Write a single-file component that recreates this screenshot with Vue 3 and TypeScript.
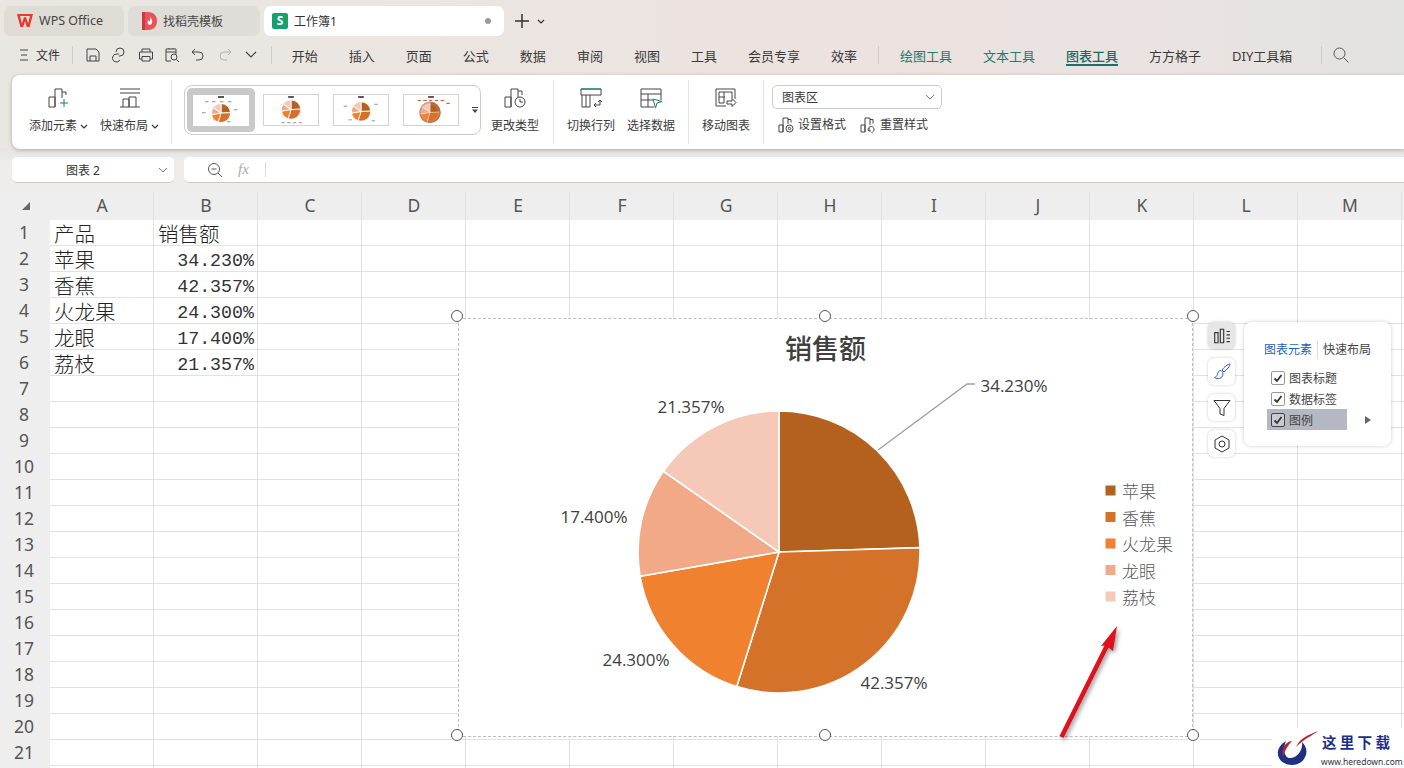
<script setup lang="ts">
const menuItems = ['开始', '插入', '页面', '公式', '数据', '审阅', '视图', '工具', '会员专享', '效率']
const columns = ['A', 'B', 'C', 'D', 'E', 'F', 'G', 'H', 'I', 'J', 'K', 'L', 'M', '']
const rowNumbers = Array.from({ length: 22 }, (_, i) => i + 1)

const sales = [
  { name: '苹果', value: 34.23, label: '34.230%', color: '#b4611f' },
  { name: '香蕉', value: 42.357, label: '42.357%', color: '#d5722a' },
  { name: '火龙果', value: 24.3, label: '24.300%', color: '#ef812f' },
  { name: '龙眼', value: 17.4, label: '17.400%', color: '#f1a988' },
  { name: '荔枝', value: 21.357, label: '21.357%', color: '#f5c8b7' },
]

function cell(row: number, col: number): string {
  if (row === 1) return col === 0 ? '产品' : col === 1 ? '销售额' : ''
  const item = sales[row - 2]
  if (!item) return ''
  return col === 0 ? item.name : col === 1 ? item.label : ''
}

function slices(cx: number, cy: number, r: number) {
  const total = sales.reduce((sum, s) => sum + s.value, 0)
  let angle = 0
  return sales.map((s) => {
    const start = angle
    angle += (s.value / total) * Math.PI * 2
    const x1 = cx + r * Math.sin(start)
    const y1 = cy - r * Math.cos(start)
    const x2 = cx + r * Math.sin(angle)
    const y2 = cy - r * Math.cos(angle)
    const large = angle - start > Math.PI ? 1 : 0
    return {
      color: s.color,
      d: `M${cx} ${cy}L${x1.toFixed(2)} ${y1.toFixed(2)}A${r} ${r} 0 ${large} 1 ${x2.toFixed(2)} ${y2.toFixed(2)}Z`,
    }
  })
}

const pie = slices(779, 551, 141)

const dataLabels = [
  { text: '34.230%', x: 1014, y: 384 },
  { text: '42.357%', x: 894, y: 681 },
  { text: '24.300%', x: 636, y: 658 },
  { text: '17.400%', x: 594, y: 515 },
  { text: '21.357%', x: 691, y: 405 },
]
const legendY = [489.5, 516, 542.5, 569, 595.5]

const handles = [
  { x: 457, y: 316 },
  { x: 825, y: 316 },
  { x: 1193, y: 316 },
  { x: 457, y: 735 },
  { x: 825, y: 735 },
  { x: 1193, y: 735 },
]

const thumbs = [
  { selected: true, cx: 28, cy: 18, r: 9.5, dots: [[12, 6], [19, 6], [27, 6], [35, 6], [9, 17], [41, 14], [34, 26], [20, 24]] },
  { selected: false, cx: 28, cy: 15, r: 10, dots: [[18, 28], [24, 28], [30, 28], [36, 28]] },
  { selected: false, cx: 28, cy: 17, r: 10, dots: [[10, 11], [42, 9], [39, 26], [15, 25]] },
  { selected: false, cx: 27, cy: 18, r: 11, dots: [[14, 5], [20, 5], [26, 5], [32, 5], [38, 5], [44, 8]] },
]
const thumbPies = thumbs.map((t) => slices(t.cx, t.cy, t.r))
</script>

<template>
  <div class="app">
    <header class="chrome">
      <div class="tabbar">
        <div class="tab tab-wps">
          <svg class="logo" viewBox="0 0 16 13" width="16" height="13"><path d="M0 0h16l-3.400 13H9.800L8 7.200 6.200 13H3.400zM3 2l1.900 7.400L7 3.200h2l2.100 6.200L13 2z" fill="#e8392c" /></svg>
          <span>WPS Office</span>
        </div>
        <div class="tab tab-tpl">
          <svg class="logo" viewBox="0 0 15 18" width="15" height="18"><path d="M0 0h6c6 0 9 4 9 9s-3 9-9 9H0z" fill="#e8545a" /><path d="M0 0h3v18H0z" fill="#c93a44" /><path d="M8 4c1 3 3 4 2 7-.5 2-3 2.500-4 1-1-1.500 0-3 1-4 0 1 .3 1.500 .8 1.500C8.500 8 8.500 6 8 4z" fill="#fff" /></svg>
          <span>找稻壳模板</span>
        </div>
        <div class="tab tab-active">
          <span class="sheet-logo">S</span>
          <span class="tab-name">工作簿1</span>
          <span class="dot"></span>
        </div>
        <svg class="plus" viewBox="0 0 14 14" width="14" height="14"><path d="M7 0v14M0 7h14" stroke="#333" stroke-width="1.500" fill="none" /></svg>
        <svg class="chev tab-chev" viewBox="0 0 8 5" width="8" height="5"><path d="M1 1l3 3 3-3" /></svg>
      </div>

      <nav class="menubar">
        <svg class="hamb" viewBox="0 0 8 12" width="8" height="12"><path d="M0 1h8M1 6h6M0 11h8" stroke="#444" fill="none" /></svg>
        <span class="file">文件</span>
        <i class="vsep first"></i>
        <div class="quick">
          <svg viewBox="0 0 16 16" class="ic"><path d="M2 2h9l3 3v9H2zM5 14V9h6v5" /></svg>
          <svg viewBox="0 0 16 16" class="ic"><path d="M8 9h1a4 4 0 1 0-4-4M8 7H6a4 4 0 1 0 3 6" /></svg>
          <svg viewBox="0 0 16 16" class="ic"><path d="M4 5V2h8v3M4 12H1.500V5h13v7H12M4 9.500h8V14H4z" /></svg>
          <svg viewBox="0 0 16 16" class="ic"><path d="M7 14H2V2h10v5M2 5h10M5 2V1M9 2V1" /><circle cx="10" cy="10" r="3" /><path d="M12.500 12.500L15 15" /></svg>
          <svg viewBox="0 0 16 16" class="ic"><path d="M5 2L2 5l3 3M2 5h7a4 4 0 0 1 0 8H6" /></svg>
          <svg viewBox="0 0 16 16" class="ic faint"><path d="M11 2l3 3-3 3M14 5H7a4 4 0 0 0 0 8h3" /></svg>
          <svg viewBox="0 0 12 8" class="qchev"><path d="M1 1l5 5 5-5" /></svg>
        </div>
        <i class="vsep second"></i>
        <div class="menu-items">
          <span v-for="item in menuItems" :key="item">{{ item }}</span>
          <i class="vsep"></i>
          <span class="tool">绘图工具</span>
          <span class="tool">文本工具</span>
          <span class="tool active">图表工具</span>
          <span>方方格子</span>
          <span>DIY工具箱</span>
          <i class="vsep end"></i>
          <svg class="search" viewBox="0 0 16 16" width="16" height="16"><circle cx="6.500" cy="6.500" r="5.500" /><path d="M10.500 10.500L15.500 15.500" /></svg>
        </div>
      </nav>

      <section class="ribbon">
        <div class="group g-add">
          <div class="big w-add">
            <svg viewBox="0 0 22 20" class="ic big-ic"><path d="M1 9h6v10H1zM7 19V1h7v9M14 4h4v3" /><path d="M16 11v8M12 15h8" class="teal" /></svg>
            <span class="blabel">添加元素<svg class="chev" viewBox="0 0 8 5" width="8" height="5"><path d="M1 1l3 3 3-3" /></svg></span>
          </div>
          <div class="big w-layout">
            <svg viewBox="0 0 22 20" class="ic big-ic"><path d="M1 1h20M1 5h20M1 19h20M4 19V11h6v8M10 19V9h7v10" /></svg>
            <span class="blabel">快速布局<svg class="chev" viewBox="0 0 8 5" width="8" height="5"><path d="M1 1l3 3 3-3" /></svg></span>
          </div>
        </div>
        <i class="rsep"></i>
        <div class="group g-gallery">
          <div class="gallery">
            <div v-for="(t, i) in thumbs" :key="i" class="thumb" :class="{ selected: t.selected }">
              <svg viewBox="0 0 56 31" class="thumb-svg">
                <defs v-if="i === 3">
                  <radialGradient id="thumb-shade" cx="0.500" cy="0.500" r="0.500">
                    <stop offset="0.700" stop-color="#fff" stop-opacity="0" />
                    <stop offset="1" stop-color="#7a3a10" stop-opacity="0.550" />
                  </radialGradient>
                </defs>
                <rect x="25" y="1" width="6" height="2" fill="#555" />
                <rect v-for="(p, j) in t.dots" :key="j" :x="p[0]" :y="p[1]" width="3.500" height="1.300" :fill="i === 3 ? '#b4713f' : '#aaa'" />
                <path v-for="(s, j) in thumbPies[i]" :key="j" :d="s.d" :fill="s.color" stroke="#fff" :stroke-width="i === 3 ? 0.3 : 0.9" />
                <circle v-if="i === 3" :cx="t.cx" :cy="t.cy" :r="t.r" fill="url(#thumb-shade)" />
              </svg>
            </div>
            <svg class="gallery-more" viewBox="0 0 8 8" width="8" height="8"><path d="M1 1.500h6" stroke="#444" fill="none" /><path d="M1 3.500h6L4 7z" fill="#444" /></svg>
          </div>
          <div class="big w-type">
            <svg viewBox="0 0 22 20" class="ic big-ic"><path d="M1 9h6v10H1zM7 19V1h7v8M14 3h4v4" /><circle cx="16" cy="14" r="5" /><path d="M16 14v-3M16 14h3" /></svg>
            <span class="blabel">更改类型</span>
          </div>
        </div>
        <i class="rsep"></i>
        <div class="group g-data">
          <div class="big w-data">
            <svg viewBox="0 0 22 20" class="ic big-ic"><path d="M1 1h20v6H1zM2 7v12h8V7M6 7v12" /><path d="M14 17h6v-5M18 14l2-2 2 2M16 15l-2 2 2 2" /><path d="M1 1h20" class="teal" /></svg>
            <span class="blabel">切换行列</span>
          </div>
          <div class="big w-data">
            <svg viewBox="0 0 22 20" class="ic big-ic"><path d="M1 1h20v11M1 1v18h13M1 6h20M1 12h12M8 6v13" /><path d="M13 11l9 2.500-5 1.500-1.500 5z" class="teal" /></svg>
            <span class="blabel">选择数据</span>
          </div>
        </div>
        <i class="rsep"></i>
        <div class="group g-move">
          <div class="big w-move">
            <svg viewBox="0 0 22 20" class="ic big-ic"><path d="M11 18H1V1h19v10M4 4v11h5M4 4h13v6M4 9h6M9 4v11" /><path d="M12 13h5v-2.500l4 4-4 4V16h-5z" /></svg>
            <span class="blabel">移动图表</span>
          </div>
        </div>
        <i class="rsep"></i>
        <div class="g-format">
          <div class="select">
            <span>图表区</span>
            <svg class="sel-chev" viewBox="0 0 10 6" width="10" height="6"><path d="M1 1l4 4 4-4" /></svg>
          </div>
          <div class="format-row">
            <span class="fmt">
              <svg viewBox="0 0 16 16" class="ic"><path d="M1 8h4v7H1zM5 15V1h5v6M10 2.500h3v3" /><circle cx="11.500" cy="11.500" r="3.500" /><circle cx="11.500" cy="11.500" r="1.200" /></svg>
              设置格式
            </span>
            <span class="fmt">
              <svg viewBox="0 0 16 16" class="ic"><path d="M1 8h4v7H1zM5 15V1h5v7M10 2.500h3v4M8.500 14a3 3 0 1 1 3 1.500M9 11v3h2" /></svg>
              重置样式
            </span>
          </div>
        </div>
      </section>

      <div class="formula">
        <div class="namebox">
          <span>图表 2</span>
          <svg class="sel-chev" viewBox="0 0 10 6" width="10" height="6"><path d="M1 1l4 4 4-4" /></svg>
        </div>
        <div class="fx-input">
          <svg class="zoom-ic" viewBox="0 0 16 16" width="16" height="16"><circle cx="7" cy="7" r="5.500" /><path d="M4.500 7h5M11 11l4 4" /></svg>
          <span class="fx">fx</span>
          <i class="fx-sep"></i>
        </div>
      </div>
    </header>

    <main class="sheet">
      <div class="grid">
        <div class="corner"><i></i></div>
        <div v-for="c in columns" :key="'h' + c" class="col-head">{{ c }}</div>
        <template v-for="r in rowNumbers" :key="r">
          <div class="row-head">{{ r < 22 ? r : '' }}</div>
          <div
            v-for="(c, ci) in columns"
            :key="r + '-' + ci"
            class="cell"
            :class="{ num: r > 1 && ci === 1 }"
          >{{ cell(r, ci) }}</div>
        </template>
      </div>

      <div class="chart">
        <svg class="chart-svg" viewBox="459 318 733 417" width="733" height="417">
          <text x="825.500" y="346" class="title">销售额</text>
          <path v-for="(s, i) in pie" :key="i" :d="s.d" :fill="s.color" stroke="#fff" stroke-width="1.600" />
          <path d="M878 449L967 383H975" class="leader" />
          <text v-for="l in dataLabels" :key="l.text" :x="l.x" :y="l.y" class="dlabel">{{ l.text }}</text>
          <template v-for="(s, i) in sales" :key="s.name">
            <rect x="1105.500" :y="legendY[i] - 5" width="10" height="10" :fill="s.color" />
            <text x="1122" :y="legendY[i]" class="legend">{{ s.name }}</text>
          </template>
        </svg>
        <i
          v-for="(h, i) in handles"
          :key="i"
          class="handle"
          :style="{ left: h.x - 459 + 'px', top: h.y - 319 + 'px' }"
        ></i>
      </div>

      <div class="side-btns">
        <button class="side on">
          <svg viewBox="0 0 16 16" class="ic"><path d="M1.500 5h3v9h-3zM6.500 2h3v12h-3zM12 4h3M12 7h3M12 10h3M12 13h3" /></svg>
        </button>
        <button class="side">
          <svg viewBox="0 0 18 18" class="ic blue"><path d="M17 1c-2 0-6 3-8 6l2 2c3-2 6-6 6-8zM8 7.500c-3 0-3 2-3.500 4C4 13 3 14 1.500 14.500c3 2 8 1.500 8.500-3.500 .1-1-.6-2-2-3.500z" /></svg>
        </button>
        <button class="side">
          <svg viewBox="0 0 18 18" class="ic"><path d="M1 1.500h16l-6 8v7l-4-1.500V9.500z" /></svg>
        </button>
        <button class="side">
          <svg viewBox="0 0 18 18" class="ic"><path d="M9 1l7 4v8l-7 4-7-4V5z" /><circle cx="9" cy="9" r="3" /></svg>
        </button>
      </div>

      <div class="popup">
        <div class="popup-tabs">
          <span class="ptab on">图表元素</span>
          <span class="ptab">快速布局</span>
        </div>
        <label class="check"><i class="box">
          <svg viewBox="0 0 10 10" width="10" height="10"><path d="M1.500 5.500L4 8l4.500-6" /></svg>
        </i>图表标题</label>
        <label class="check"><i class="box">
          <svg viewBox="0 0 10 10" width="10" height="10"><path d="M1.500 5.500L4 8l4.500-6" /></svg>
        </i>数据标签</label>
        <label class="check hl"><i class="box">
          <svg viewBox="0 0 10 10" width="10" height="10"><path d="M1.500 5.500L4 8l4.500-6" /></svg>
        </i>图例</label>
        <i class="more"></i>
      </div>

      <svg class="red-arrow" viewBox="1050 620 80 125" width="80" height="125">
        <path d="M1059.500 736L1104.500 645.500 1101 646 1117 626 1113 651 1108.500 647.500 1063.500 738z" fill="#e2101a" />
      </svg>

      <div class="watermark">
        <svg class="wm-logo" viewBox="1272 728 48 40" width="48" height="40">
          <path d="M1286 741C1279 745 1276 752 1279 758C1283 766 1298 768 1304 759C1308 753 1307 747 1302 742C1303 750 1298 757 1291 758C1285 759 1282 750 1286 741Z" fill="#1d2f87" />
          <path d="M1283 757C1281 748 1285 742 1292 741C1288 745 1285 750 1283 757Z" fill="#b3262f" />
          <path d="M1296 747C1300 738 1308 735 1318 731C1312 736 1305 738 1296 747Z" fill="#b3262f" />
        </svg>
        <div class="wm-text">
          <b>这里下载</b>
          <span>www.heredown.com</span>
        </div>
      </div>
    </main>
  </div>
</template>

<style>
html,
body {
  margin: 0;
  overflow: hidden;
}
</style>

<style scoped>
.app {
  width: 1404px;
  height: 768px;
  position: relative;
  overflow: hidden;
  display: flex;
  flex-direction: column;
  font-family: 'Noto Sans', 'Noto Sans CJK SC', sans-serif;
  color: #333;
  background: #fff;
}
i {
  font-style: normal;
  display: block;
}

/* top chrome */
.chrome {
  height: 192px;
  flex: none;
  background: linear-gradient(90deg, #e9e7e2 0%, #ebe5e1 35%, #ece2df 60%, #e9e3e1 85%, #e3e3e1 100%);
}
.tabbar {
  height: 40px;
  padding: 6px 0 0 4px;
  box-sizing: border-box;
  display: flex;
  align-items: flex-start;
  gap: 4px;
}
.tab {
  height: 30px;
  padding-bottom: 1px;
  border-radius: 7px;
  background: #dfdcd6;
  display: flex;
  align-items: center;
  font-size: 12px;
  box-sizing: border-box;
  color: #444;
}
.tab-wps {
  width: 120px;
  padding-left: 13px;
  gap: 6px;
  font-size: 12.500px;
}
.tab-tpl {
  width: 132px;
  padding-left: 14px;
  gap: 6px;
  background: #e0dcd8;
}
.tab-active {
  width: 240px;
  padding-left: 8px;
  background: #fff;
  color: #333;
}
.sheet-logo {
  width: 16px;
  height: 16px;
  background: #16a06c;
  border-radius: 2px;
  color: #fff;
  font-size: 12px;
  font-weight: 700;
  line-height: 15px;
  text-align: center;
}
.tab-name {
  margin-left: 6px;
  flex: 1;
}
.dot {
  width: 6px;
  height: 6px;
  border-radius: 50%;
  background: #999;
  margin-right: 13px;
}
.plus {
  margin: 8px 0 0 7px;
}
.tab-chev {
  margin: 13px 0 0 4px;
}
.chev {
  fill: none;
  stroke: #333;
  stroke-width: 1.200;
}
.menubar {
  height: 30px;
  margin-bottom: 5px;
  display: flex;
  align-items: center;
  font-size: 13px;
}
.hamb {
  margin-left: 20px;
}
.file {
  font-size: 12px;
  margin-left: 8px;
}
.vsep {
  width: 1px;
  height: 18px;
  background: #cfccc8;
  flex: none;
}
.vsep.first {
  margin-left: 12px;
}
.quick {
  display: flex;
  align-items: center;
  gap: 10.300px;
  margin-left: 12px;
}
.ic {
  width: 16px;
  height: 16px;
  fill: none;
  stroke: #444;
  stroke-width: 1;
  flex: none;
}
.ic.faint {
  stroke: #b5b3b0;
}
.qchev {
  width: 12px;
  height: 8px;
  fill: none;
  stroke: #444;
  stroke-width: 1.200;
  margin-left: 2px;
}
.vsep.second {
  margin-left: 14px;
}
.menu-items {
  display: flex;
  align-items: center;
  gap: 31px;
  margin-left: 20px;
  white-space: nowrap;
  color: #3a3a3a;
}
.menu-items .vsep {
  margin: 0 -10px;
}
.menu-items .vsep.end {
  margin: 0 -20px 0 -2px;
}
.tool {
  color: #17806a;
  position: relative;
}
.tool.active {
  color: #136f5c;
  font-weight: 500;
}
.tool.active::after {
  content: '';
  position: absolute;
  left: 0;
  right: 0;
  bottom: -1px;
  height: 2px;
  background: #1a7362;
}
.search {
  fill: none;
  stroke: #555;
  stroke-width: 1;
}

/* ribbon */
.ribbon {
  margin-left: 12px;
  height: 74px;
  position: relative;
  z-index: 1;
  background: #fff;
  border-radius: 8px 0 0 8px;
  box-shadow: 0 1px 4px rgba(0, 0, 0, 0.25);
  display: flex;
  align-items: stretch;
  font-size: 12px;
  color: #3a3a3a;
}
.rsep {
  width: 1px;
  background: #e4e4e4;
  margin: 5px 0 5px 0;
  flex: none;
}
.group {
  display: flex;
}
.g-add {
  width: 159px;
  padding-left: 11px;
  box-sizing: border-box;
}
.big {
  display: flex;
  flex-direction: column;
  align-items: center;
  padding-top: 13px;
  box-sizing: border-box;
}
.big-ic {
  width: 22px;
  height: 20px;
}
.blabel {
  margin-top: 9px;
  white-space: nowrap;
  line-height: 18px;
  display: flex;
  align-items: center;
  gap: 3px;
}
.w-add {
  width: 71px;
}
.w-layout {
  width: 71px;
}
.teal {
  stroke: #17806a;
}
.g-gallery {
  width: 381px;
  padding-left: 12px;
  box-sizing: border-box;
}
.gallery {
  margin-top: 10px;
  width: 297px;
  height: 50px;
  flex: none;
  border: 1px solid #ccc;
  border-radius: 8px;
  box-sizing: border-box;
  display: flex;
  align-items: center;
  padding-left: 2px;
  position: relative;
  gap: 14px;
}
.thumb {
  width: 56px;
  height: 32px;
  border: 1px solid #d4d4d4;
  box-sizing: border-box;
  background: #fff;
}
.thumb.selected {
  width: 68px;
  height: 44px;
  border: 0;
  border-radius: 5px;
  background: #c9c9c9;
  padding: 7px 6px 6px;
  margin-right: -6px;
}
.thumb-svg {
  display: block;
  width: 100%;
  height: 100%;
  background: #fff;
}
.gallery-more {
  position: absolute;
  right: 1px;
  top: 20px;
}
.w-type {
  width: 68px;
}
.g-data {
  width: 134px;
  padding-left: 7px;
  box-sizing: border-box;
}
.w-data {
  width: 60px;
}
.g-move {
  width: 74px;
  justify-content: center;
}
.g-format {
  padding: 10px 0 0 8px;
}
.select {
  width: 170px;
  height: 24px;
  border: 1px solid #ccc;
  border-radius: 5px;
  box-sizing: border-box;
  display: flex;
  align-items: center;
  justify-content: space-between;
  padding: 0 6px 0 9px;
}
.sel-chev {
  fill: none;
  stroke: #777;
  stroke-width: 1;
}
.format-row {
  display: flex;
  gap: 14px;
  margin: 7px 0 0 6px;
}
.fmt {
  display: flex;
  align-items: center;
  gap: 4px;
  line-height: 18px;
}

/* formula bar */
.formula {
  height: 43px;
  box-sizing: border-box;
  padding: 8px 0 9px 12px;
  display: flex;
  gap: 10px;
  font-size: 12px;
  background: linear-gradient(#e6e3e0, #eeedec 30%);
}
.namebox {
  width: 162px;
  background: #fff;
  border-radius: 5px;
  border-bottom: 1px solid #c8c8c8;
  box-sizing: border-box;
  display: flex;
  align-items: center;
  justify-content: space-between;
  padding: 0 6px 0 54px;
}
.fx-input {
  flex: 1;
  background: #fff;
  border-radius: 5px 0 0 5px;
  border-bottom: 1px solid #c8c8c8;
  box-sizing: border-box;
  display: flex;
  align-items: center;
  padding-left: 23px;
}
.zoom-ic {
  fill: none;
  stroke: #555;
  stroke-width: 1;
}
.fx {
  font-family: 'Liberation Serif', serif;
  font-style: italic;
  font-size: 15px;
  color: #aaa;
  margin-left: 15px;
}
.fx-sep {
  width: 1px;
  height: 15px;
  background: #ddd;
  margin-left: 16px;
}

/* sheet */
.sheet {
  flex: 1;
  position: relative;
  overflow: hidden;
  background: #fff;
}
.grid {
  display: grid;
  grid-template-columns: 50px repeat(14, 104px);
  grid-template-rows: 28px repeat(22, 26px);
}
.corner,
.col-head,
.row-head {
  background: #eeeeee;
  color: #555;
  font-size: 17.500px;
}
.corner {
  position: relative;
}
.corner i {
  position: absolute;
  left: 22px;
  top: 10px;
  width: 0;
  height: 0;
  border-left: 8px solid transparent;
  border-bottom: 8px solid #666;
}
.col-head {
  text-align: center;
  line-height: 27px;
  padding-left: 1px;
  border-right: 1px solid #e2e2e2;
  box-sizing: border-box;
}
.row-head {
  text-align: center;
  line-height: 24px;
  padding-right: 2px;
  box-sizing: border-box;
}
.cell {
  border-right: 1px solid #e2e2e2;
  border-bottom: 1px solid #e2e2e2;
  box-sizing: border-box;
  padding: 0 3px 0 4px;
  font-size: 20.500px;
  line-height: 30px;
  height: 26px;
  overflow: visible;
  white-space: nowrap;
  color: #222;
  font-weight: 300;
  font-family: 'Liberation Serif', 'Noto Sans CJK SC', serif;
}
.cell.num {
  text-align: right;
  font-family: 'Liberation Mono', monospace;
  font-size: 18.300px;
  color: #333;
}

/* chart */
.chart {
  position: absolute;
  left: 459px;
  top: 127px;
  width: 733px;
  height: 417px;
  background: #fff;
  outline: 1px dashed #bdbdbd;
}
.chart-svg {
  display: block;
}
.title {
  font-size: 27px;
  font-weight: 500;
  fill: #404040;
  text-anchor: middle;
  dominant-baseline: central;
  font-family: 'Noto Sans CJK SC', serif;
}
.leader {
  fill: none;
  stroke: #a0a0a0;
  stroke-width: 1.300;
}
.dlabel {
  font-size: 17px;
  fill: #404040;
  text-anchor: middle;
  dominant-baseline: central;
  font-family: 'Open Sans', sans-serif;
}
.legend {
  font-size: 17px;
  fill: #595959;
  dominant-baseline: central;
  font-family: 'Noto Sans CJK SC', sans-serif;
  font-weight: 300;
}
.handle {
  position: absolute;
  width: 12px;
  height: 12px;
  margin: -6px 0 0 -6px;
  border-radius: 50%;
  border: 1px solid #555;
  background: #fff;
  box-sizing: border-box;
}

/* chart side tools */
.side-btns {
  position: absolute;
  left: 1208px;
  top: 130px;
  display: flex;
  flex-direction: column;
  gap: 9px;
}
.side {
  width: 27px;
  height: 27px;
  padding: 0;
  border: 0;
  border-radius: 6px;
  background: #fff;
  box-shadow: 0 0 3px rgba(0, 0, 0, 0.22);
  display: flex;
  align-items: center;
  justify-content: center;
}
.side .ic {
  width: 18px;
  height: 18px;
  stroke: #333;
}
.side.on {
  background: #e6e6e6;
}
.side .ic.blue {
  stroke: #2a5bb5;
}
.popup {
  position: absolute;
  left: 1244px;
  top: 130px;
  width: 147px;
  height: 124px;
  box-sizing: border-box;
  padding: 19px 0 0 23px;
  background: #fff;
  border-radius: 8px;
  box-shadow: 0 0 4px rgba(0, 0, 0, 0.2);
  font-size: 12px;
  color: #444;
}
.popup-tabs {
  display: flex;
  margin: 0 0 8px -3px;
  line-height: 18px;
}
.ptab {
  white-space: nowrap;
}
.ptab.on {
  color: #1f5fb4;
  padding-right: 5px;
  margin-right: 5px;
  border-right: 1px solid #ddd;
}
.check {
  display: flex;
  align-items: center;
  gap: 4px;
  width: 80px;
  height: 21px;
  padding-left: 4px;
  box-sizing: border-box;
  white-space: nowrap;
}
.check.hl {
  background: #b4b8c2;
}
.box {
  width: 14px;
  height: 14px;
  border: 1px solid #999;
  border-radius: 2px;
  background: #fff;
  box-sizing: border-box;
  display: flex;
  align-items: center;
  justify-content: center;
  flex: none;
}
.hl .box {
  background: #c7cad2;
  border-color: #444;
}
.box svg {
  fill: none;
  stroke: #333;
  stroke-width: 1.800;
}
.more {
  position: absolute;
  left: 121px;
  top: 94px;
  width: 0;
  height: 0;
  border-left: 6px solid #666;
  border-top: 4px solid transparent;
  border-bottom: 4px solid transparent;
}

/* annotation */
.red-arrow {
  position: absolute;
  left: 1050px;
  top: 428px;
  filter: drop-shadow(2px 2px 2px rgba(0, 0, 0, 0.4));
}
.watermark {
  position: absolute;
  left: 1272px;
  top: 536px;
  width: 132px;
  height: 40px;
  background: #fff;
  display: flex;
}
.wm-logo {
  flex: none;
}
.wm-text {
  display: flex;
  flex-direction: column;
  margin-left: 2px;
  color: #1d2f87;
}
.wm-text b {
  font-size: 14.500px;
  letter-spacing: 3.300px;
  line-height: 16px;
  margin-top: 6px;
  white-space: nowrap;
}
.wm-text span {
  font-size: 8.500px;
  line-height: 12px;
  margin-top: 6px;
  margin-left: -1px;
  color: #334;
  white-space: nowrap;
}
</style>
